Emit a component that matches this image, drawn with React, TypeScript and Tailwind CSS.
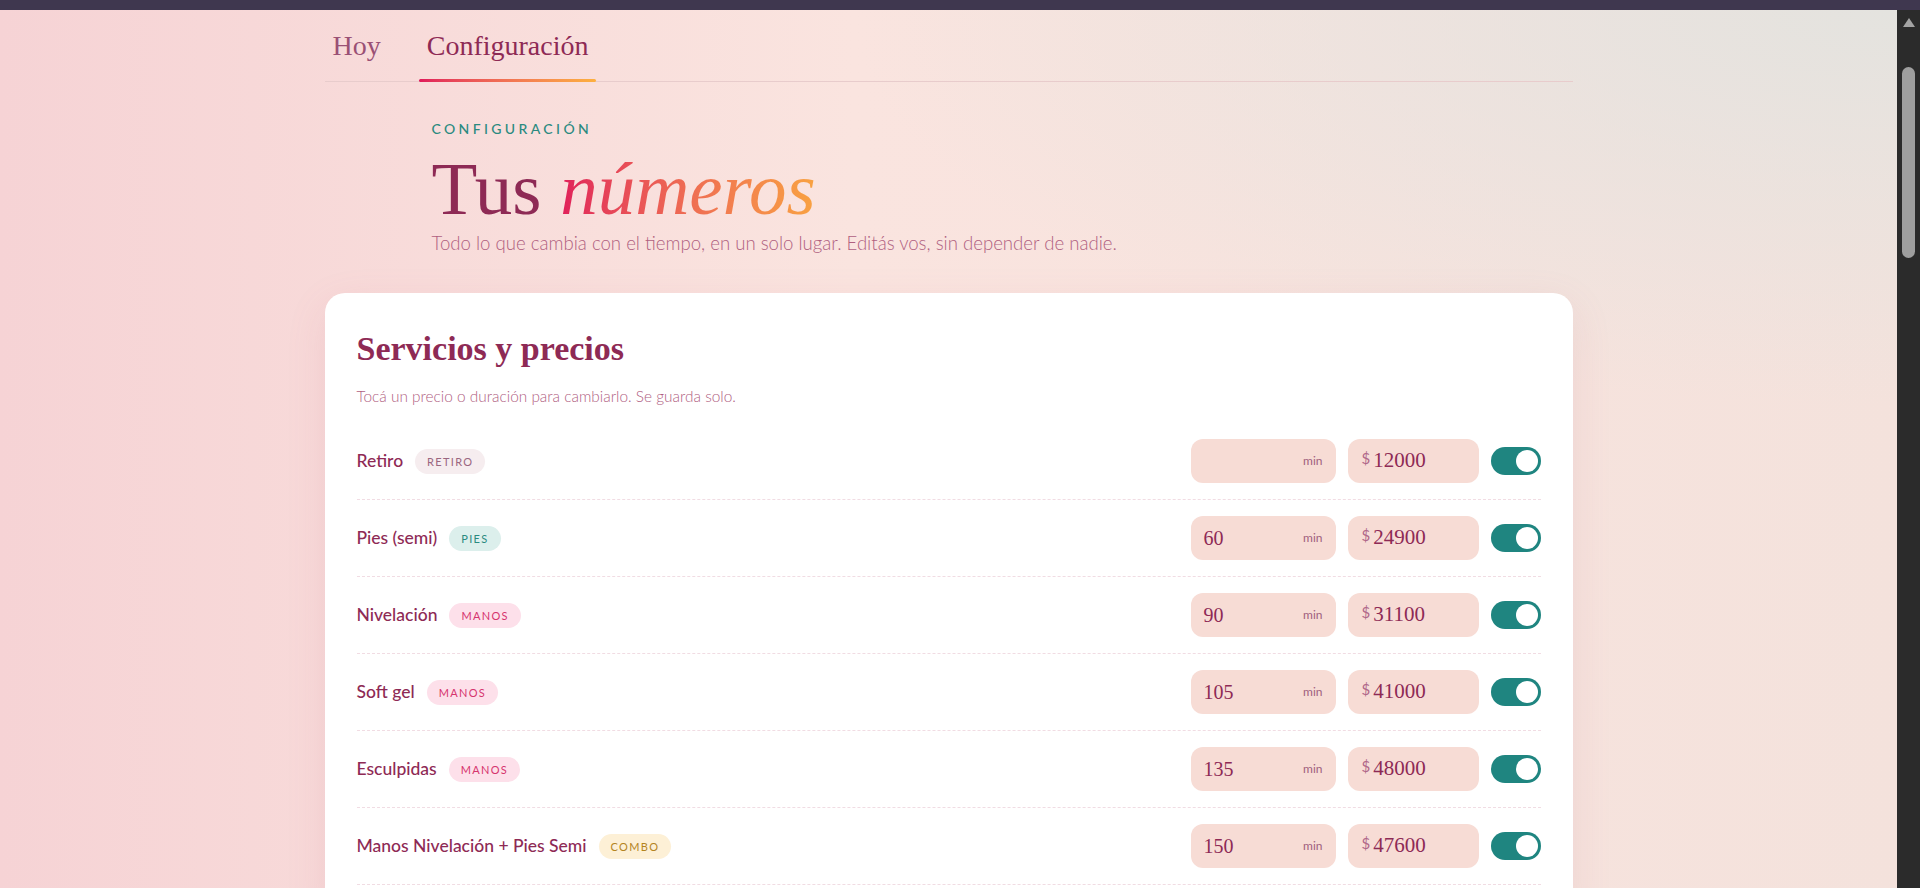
import React from "react";

type Row = {
  name: string;
  tag: "RETIRO" | "PIES" | "MANOS" | "COMBO";
  min: string;
  price: string;
};

const rows: Row[] = [
  { name: "Retiro", tag: "RETIRO", min: "", price: "12000" },
  { name: "Pies (semi)", tag: "PIES", min: "60", price: "24900" },
  { name: "Nivelación", tag: "MANOS", min: "90", price: "31100" },
  { name: "Soft gel", tag: "MANOS", min: "105", price: "41000" },
  { name: "Esculpidas", tag: "MANOS", min: "135", price: "48000" },
  { name: "Manos Nivelación + Pies Semi", tag: "COMBO", min: "150", price: "47600" },
];

const tagStyles: Record<Row["tag"], string> = {
  RETIRO: "bg-[#f6edef] text-[#9a6680]",
  PIES: "bg-[#dcefec] text-[#2a8a80]",
  MANOS: "bg-[#fde0ea] text-[#d6346e]",
  COMBO: "bg-[#fdf0d6] text-[#b4841e]",
};

const serif = "font-['Liberation_Serif',serif]";
const sans = "font-['Lato','Liberation_Sans',sans-serif]";

function Toggle() {
  return (
    <div className="w-[50px] h-[28px] rounded-full bg-[#1f8580] flex items-center justify-end pr-[3px] shrink-0">
      <div className="w-[22px] h-[22px] rounded-full bg-white" />
    </div>
  );
}

function ServiceRow({ row }: { row: Row }) {
  return (
    <div className="flex items-center py-4 border-b border-dashed border-[#f1dce3]">
      <div className="flex items-center gap-3 flex-1">
        <span className={`${sans} text-[17.5px] font-medium text-[#8e2a55]`}>{row.name}</span>
        <span
          className={`${sans} ${tagStyles[row.tag]} rounded-full px-3 py-[5px] text-[11px] leading-[15px] tracking-[0.12em]`}
        >
          {row.tag}
        </span>
      </div>
      <div className="flex items-center gap-3">
        <div className="w-[145px] h-[44px] rounded-xl bg-[#f7dcd5] flex items-center justify-between px-[13px]">
          <span className={`${serif} text-[20px] text-[#8e2a55]`}>{row.min}</span>
          <span className={`${sans} text-[12px] text-[#a0607e]`}>min</span>
        </div>
        <div className="w-[131px] h-[44px] rounded-xl bg-[#f7dcd5] flex items-center gap-[3px] px-[14px]">
          <span className={`${sans} text-[15px] text-[#b0688a] -translate-y-[3px]`}>$</span>
          <span className={`${serif} text-[21px] text-[#8e2a55]`}>{row.price}</span>
        </div>
        <Toggle />
      </div>
    </div>
  );
}

export default function App() {
  return (
    <div className="h-[888px] w-full overflow-hidden flex flex-col bg-[#2b2b2b]">
      <div className="h-[10px] shrink-0 bg-[#3f374f]" />
      <div className="flex flex-1 min-h-0">
        <main className="flex-1 min-w-0 overflow-hidden bg-[radial-gradient(ellipse_55%_45%_at_100%_0%,#e4e3df_0%,rgba(228,227,223,0)_100%),linear-gradient(90deg,#f6d3d5_0%,#fae4df_45%,#f4e2dc_100%)]">
          <div className="max-w-[1280px] mx-auto px-4">
            <nav className="flex items-end gap-[30px] pt-[18px] border-b border-[#e8cccc]">
              <div className="relative px-2 pb-[17px]">
                <span className={`${serif} text-[28px] leading-[36px] text-[#9a5075]`}>Hoy</span>
              </div>
              <div className="relative px-2 pb-[17px]">
                <span className={`${serif} text-[28px] leading-[36px] text-[#8e2a55]`}>Configuración</span>
                <div className="absolute left-0 right-0 bottom-[-1px] h-[3px] rounded-full bg-gradient-to-r from-[#e0185a] to-[#fdb03f]" />
              </div>
            </nav>

            <header className="max-w-[1034px] mx-auto pt-[37px]">
              <div className={`${sans} text-[14px] leading-[20px] font-medium tracking-[0.24em] text-[#2a8a80]`}>
                CONFIGURACIÓN
              </div>
              <h1 className={`${serif} text-[75px] leading-[72px] mt-[14px] text-[#8e2a55]`}>
                Tus{" "}
                <span className="italic inline-block pr-2 bg-gradient-to-r from-[#e01e5a] to-[#f9a53f] bg-clip-text text-transparent">
                  números
                </span>
              </h1>
              <p className={`${sans} font-light text-[18.6px] leading-[28px] mt-[4px] text-[#b0607f]`}>
                Todo lo que cambia con el tiempo, en un solo lugar. Editás vos, sin depender de nadie.
              </p>
            </header>

            <section className="mt-9 bg-white rounded-[20px] px-8 pt-9 pb-8 shadow-[0_12px_40px_rgba(190,100,120,0.12)]">
              <h2 className={`${serif} font-bold text-[34px] leading-[40px] text-[#8e2a55]`}>
                Servicios y precios
              </h2>
              <p className={`${sans} font-light text-[15.4px] leading-[20px] mt-[17px] text-[#b0607f]`}>
                Tocá un precio o duración para cambiarlo. Se guarda solo.
              </p>
              <div className="mt-[17px]">
                {rows.map((r) => (
                  <ServiceRow key={r.name} row={r} />
                ))}
              </div>
            </section>
          </div>
        </main>
        <div className="w-[23px] shrink-0 bg-[#2b2b2b] flex flex-col items-center pt-[7px]">
          <svg width="14" height="11" viewBox="0 0 14 11">
            <path d="M7 1 L13 10 L1 10 Z" fill="#a3a3a3" />
          </svg>
          <div className="mt-[39px] w-[13px] h-[191px] rounded-full bg-[#9f9f9f]" />
        </div>
      </div>
    </div>
  );
}
